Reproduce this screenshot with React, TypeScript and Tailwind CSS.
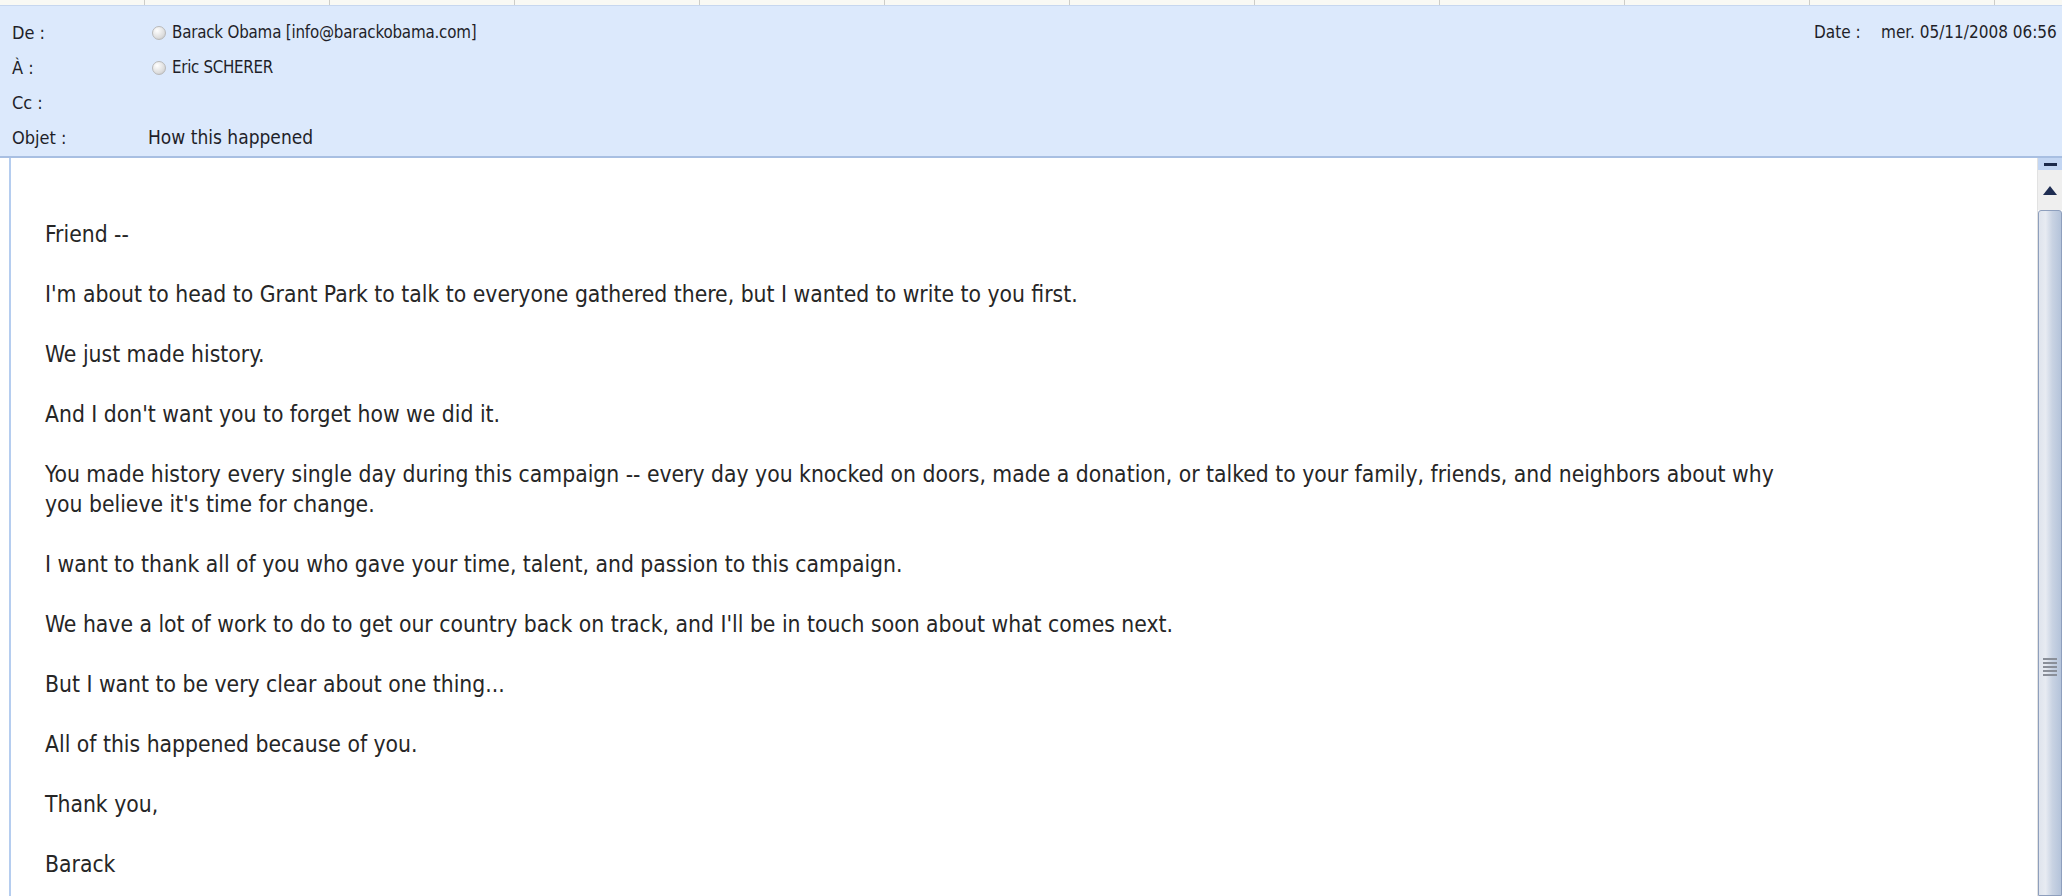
const paragraphs: string[][] = [
  ["Friend --"],
  ["I'm about to head to Grant Park to talk to everyone gathered there, but I wanted to write to you first."],
  ["We just made history."],
  ["And I don't want you to forget how we did it."],
  [
    "You made history every single day during this campaign -- every day you knocked on doors, made a donation, or talked to your family, friends, and neighbors about why",
    "you believe it's time for change.",
  ],
  ["I want to thank all of you who gave your time, talent, and passion to this campaign."],
  ["We have a lot of work to do to get our country back on track, and I'll be in touch soon about what comes next."],
  ["But I want to be very clear about one thing..."],
  ["All of this happened because of you."],
  ["Thank you,"],
  ["Barack"],
]

function Presence() {
  return (
    <span className="inline-block w-[14px] h-[14px] rounded-full border border-[#b9b9b9] bg-[radial-gradient(circle_at_35%_30%,#ffffff,#dcdcdc_65%,#b8b8b8)] mr-[6px] shrink-0" />
  )
}

function HeaderRow({ label, children }: { label: string; children?: React.ReactNode }) {
  return (
    <div className="flex items-center h-[35px]">
      <div className="w-[140px] shrink-0 text-[18px] text-[#1f1f29]">{label}</div>
      {children}
    </div>
  )
}

export default function App() {
  return (
    <div className="w-[2062px] h-[896px] overflow-hidden bg-white flex flex-col font-['DejaVu_Sans_Condensed','DejaVu_Sans',sans-serif]">
      {/* column header strip left over from the message list */}
      <div className="h-[6px] shrink-0 flex bg-[#f9f9f4] border-b border-[#c7d7ef]">
        <div className="w-[145px] shrink-0 border-r border-[#cdcdc8]" />
        {Array.from({ length: 11 }).map((_, i) => (
          <div key={i} className="w-[185px] shrink-0 border-r border-[#cdcdc8]" />
        ))}
      </div>

      {/* message header */}
      <div className="h-[152px] shrink-0 bg-[#dce9fc] border-b-2 border-[#a8bfe2] pl-[12px] pt-[9px] overflow-hidden">
        <HeaderRow label="De :">
          <div className="w-[1662px] shrink-0 flex items-center">
            <Presence />
            <span className="text-[16.8px] tracking-[-0.2px] text-[#1f1f29] whitespace-nowrap">
              Barack Obama [info@barackobama.com]
            </span>
          </div>
          <div className="flex items-center shrink-0 whitespace-nowrap text-[17px] text-[#1f1f29]">
            <span className="w-[67px]">Date :</span>
            <span>mer. 05/11/2008 06:56</span>
          </div>
        </HeaderRow>
        <HeaderRow label="À :">
          <Presence />
          <span className="text-[16.8px] tracking-[-0.3px] text-[#1f1f29]">Eric SCHERER</span>
        </HeaderRow>
        <HeaderRow label="Cc :" />
        <div className="flex items-center h-[35px]">
          <div className="w-[136px] shrink-0 text-[18px] text-[#1f1f29]">Objet :</div>
          <span className="text-[19px] text-[#1f1f29]">How this happened</span>
        </div>
      </div>

      {/* message body */}
      <div className="flex-1 flex min-h-0">
        <div className="ml-[9px] flex-1 border-l-2 border-[#b5cdef] pl-[34px] pt-[61px] text-[22.7px] leading-[30px] text-[#262626]">
          {paragraphs.map((lines, i) => (
            <p key={i} className="mb-[30px] whitespace-nowrap">
              {lines.map((l, j) => (
                <span key={j}>
                  {j > 0 && <br />}
                  {l}
                </span>
              ))}
            </p>
          ))}
        </div>

        {/* scrollbar */}
        <div className="w-[25px] shrink-0 flex flex-col border-l border-[#e2e2e2]">
          <div className="h-[12px] bg-[#c3d6f3] flex items-center justify-center">
            <div className="w-[13px] h-[3px] bg-[#1c2a4a]" />
          </div>
          <div className="h-[40px] bg-[#efefef] flex items-center justify-center">
            <svg width="14" height="9" viewBox="0 0 14 9">
              <path d="M7 0 L14 9 L0 9 Z" fill="#1f2d52" />
            </svg>
          </div>
          <div className="flex-1 rounded-t-[3px] border border-[#8e9fbd] bg-[linear-gradient(90deg,#dfe4ed_0%,#e7ebf2_30%,#c9d3e3_60%,#b4c3da_100%)] flex flex-col items-center pt-[447px]">
            <div className="flex flex-col gap-[2px]">
              {[0, 1, 2, 3, 4].map((i) => (
                <div key={i} className="w-[14px] h-[2px] bg-[#8a8f99]" />
              ))}
            </div>
          </div>
        </div>
      </div>
    </div>
  )
}
